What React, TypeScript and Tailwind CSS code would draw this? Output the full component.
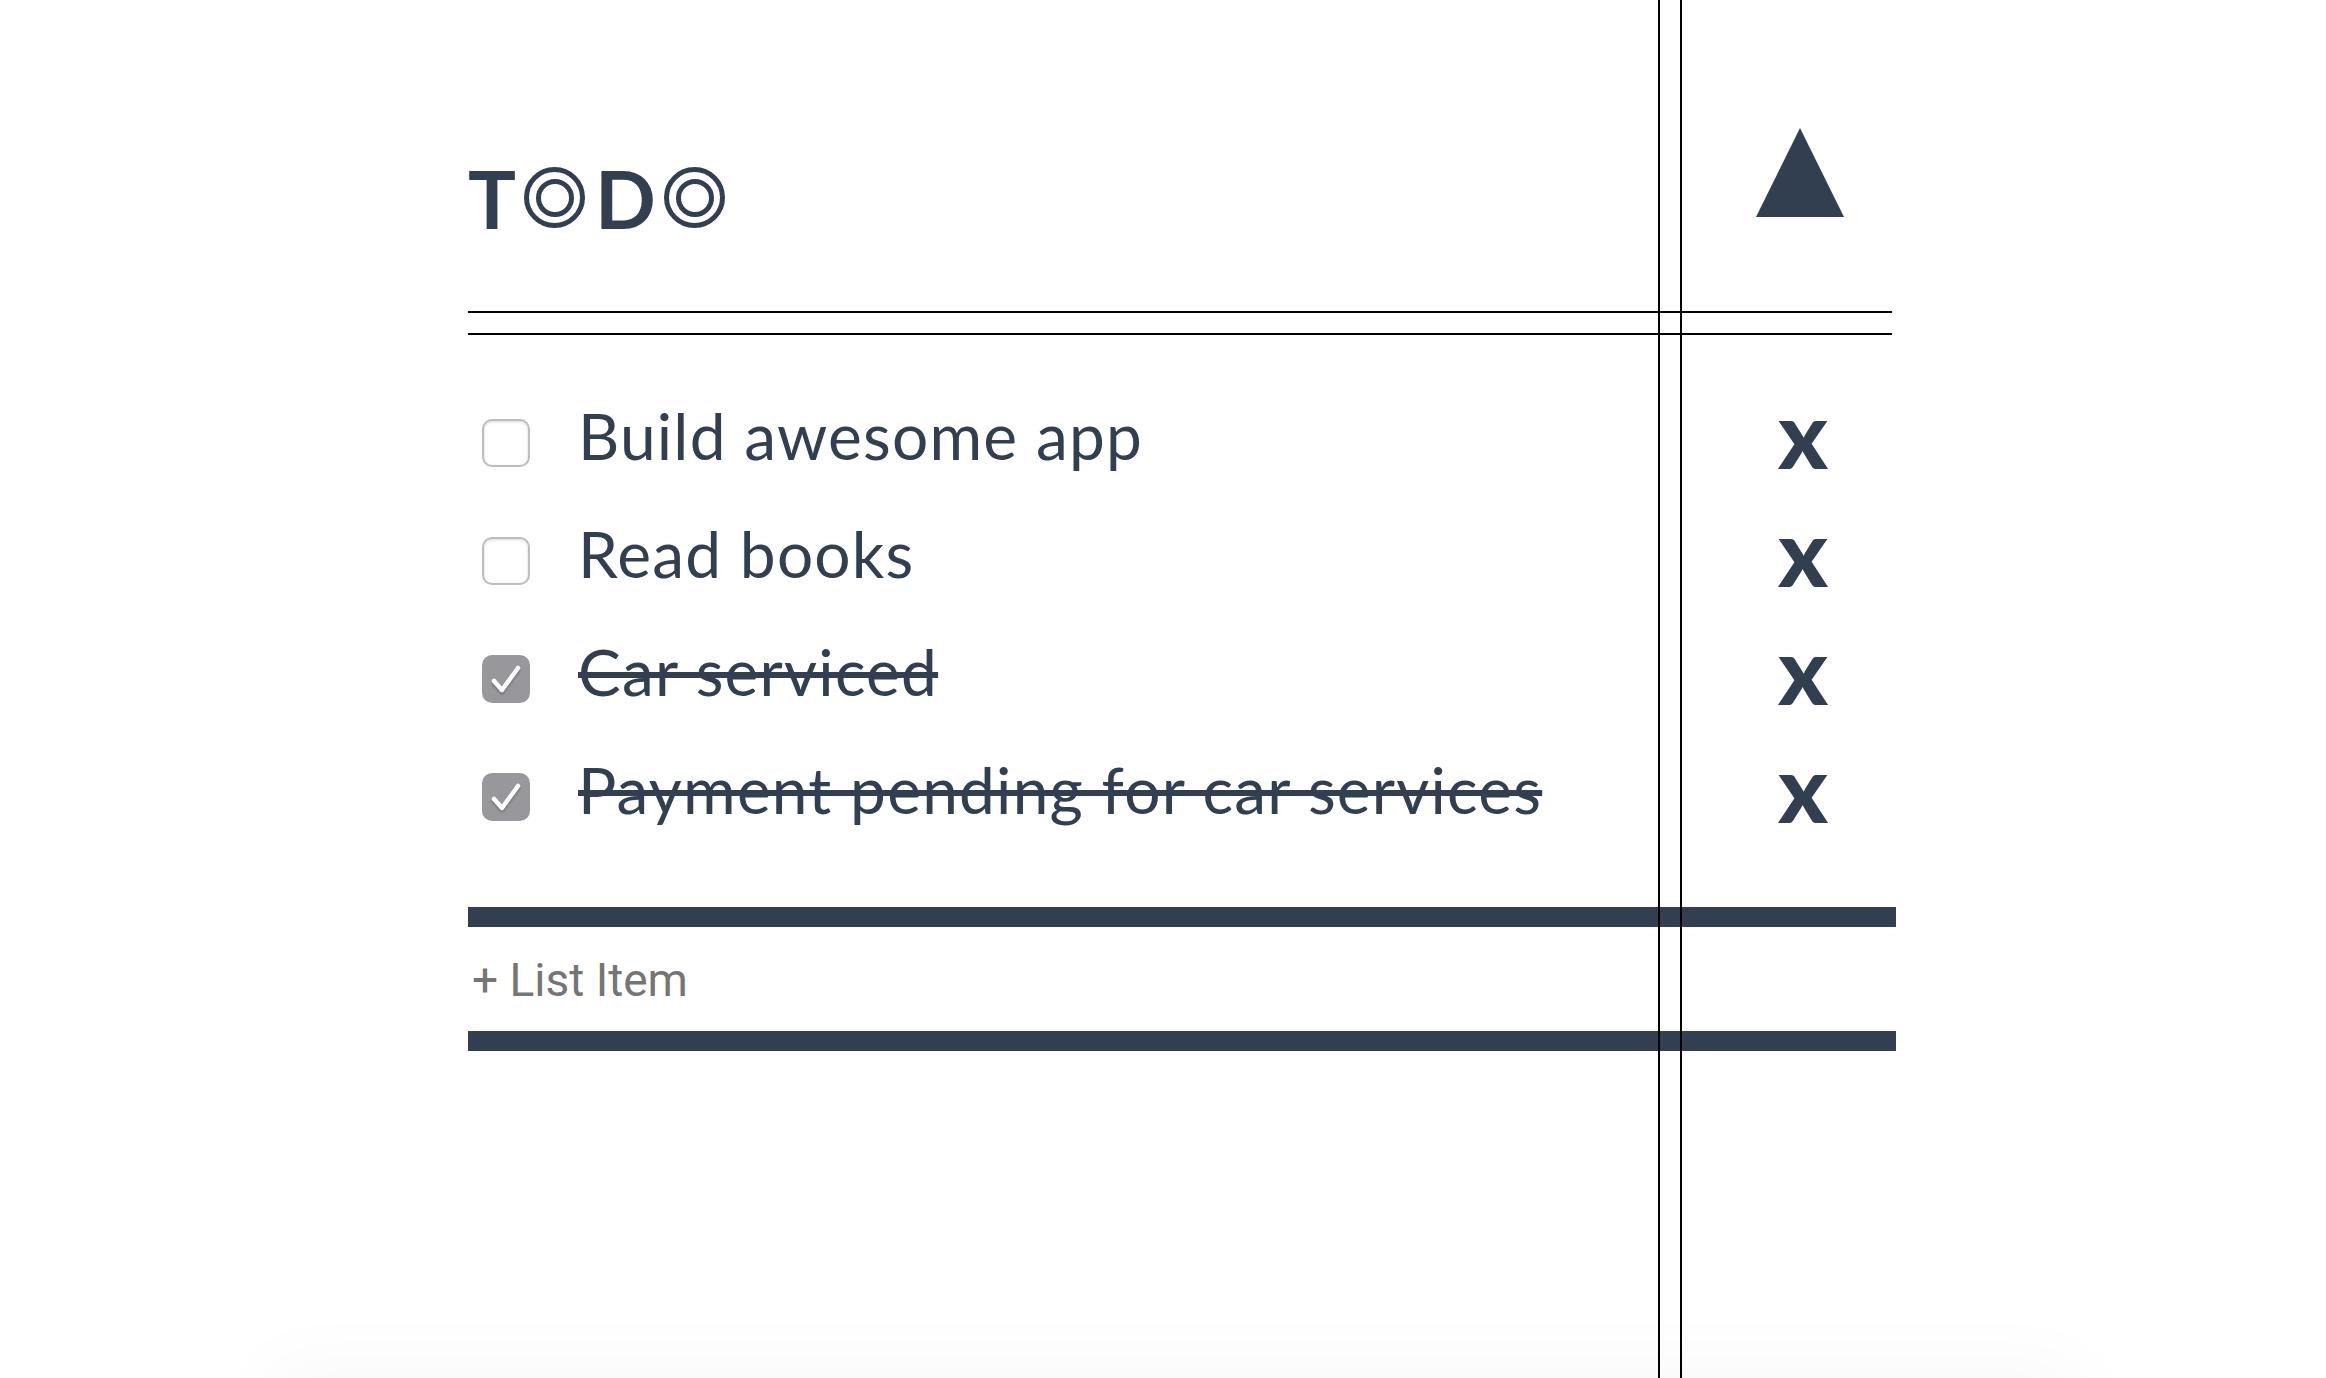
import React from "react";

const ink = "#323f51";
const items = [
  { text: "Build awesome app", done: false },
  { text: "Read books", done: false },
  { text: "Car serviced", done: true },
  { text: "Payment pending for car services", done: true },
];

function Ring() {
  return (
    <span className="inline-flex h-[61px] w-[61px] items-center justify-center rounded-full border-[5px] border-[#323f51] align-middle">
      <span className="flex h-[38px] w-[38px] items-center justify-center overflow-hidden rounded-full border-[5px] border-[#323f51] text-[1px] text-transparent">O</span>
    </span>
  );
}

function Box({ done }: { done: boolean }) {
  if (done) {
    return (
      <span className="block h-[48px] w-[48px] shrink-0 rounded-[10px] bg-[#98979c]">
        <svg width="48" height="48" viewBox="0 0 48 48" fill="none" className="drop-shadow-[0_2px_1px_rgba(0,0,0,0.25)]">
          <path d="M12 26 L20 35 L36 13" stroke="#ffffff" strokeWidth="4.5" strokeLinecap="round" strokeLinejoin="round" />
        </svg>
      </span>
    );
  }
  return <span className="block h-[48px] w-[48px] shrink-0 rounded-[10px] border-2 border-[#bdbdbd] bg-white shadow-[inset_0_1px_3px_rgba(0,0,0,0.15)]" />;
}

export default function App() {
  return (
    <div className="relative h-screen w-full overflow-hidden bg-white font-['Lato',sans-serif] text-[#323f51]">
      <div className="ml-[468px] w-[1428px]">
        <header className="flex h-[311px] w-[1424px] items-start justify-between">
          <h1 className="mt-[167px] flex h-[61px] items-center text-[80px] font-bold leading-none">
            <span className="w-[56px]">T</span>
            <Ring />
            <span className="ml-[10px] w-[69px]">D</span>
            <Ring />
          </h1>
          <div className="mr-[48px] mt-[128px]">
            <svg width="88" height="89" viewBox="0 0 88 89" className="block">
              <polygon points="44,0 88,89 0,89" fill={ink} />
            </svg>
          </div>
        </header>
        <div className="h-[24px] w-[1424px] border-y-2 border-black" />
        <ul className="mt-[84px] flex flex-col">
          {items.map((it) => (
            <li key={it.text} className="flex h-[118px] w-[1424px] items-start pl-[14px]">
              <Box done={it.done} />
              <span
                className={
                  "ml-[48px] -mt-[28px] text-[64px] leading-[90px] tracking-[1.2px] whitespace-nowrap " +
                  (it.done ? "line-through decoration-[6px]" : "")
                }
              >
                {it.text}
              </span>
              <span className="ml-auto mr-[64px] -mt-[46px] text-[94px] font-black leading-[120px]">x</span>
            </li>
          ))}
        </ul>
        <form className="mt-[16px] w-[1428px] border-y-[20px] border-[#323f51]">
          <input
            type="text"
            placeholder="+ List Item"
            className="block h-[104px] w-full bg-transparent pb-0 pl-[4px] pt-[2px] font-['Roboto',sans-serif] text-[46px] text-[#757575] outline-none placeholder:text-[#757575]"
          />
        </form>
      </div>
      <div className="pointer-events-none absolute left-[270px] top-full h-[40px] w-[1810px] shadow-[0_0_80px_rgba(0,0,0,0.05)]" />
      <div className="pointer-events-none absolute inset-y-0 left-[1658px] w-[24px] border-x-2 border-black" />
    </div>
  );
}
